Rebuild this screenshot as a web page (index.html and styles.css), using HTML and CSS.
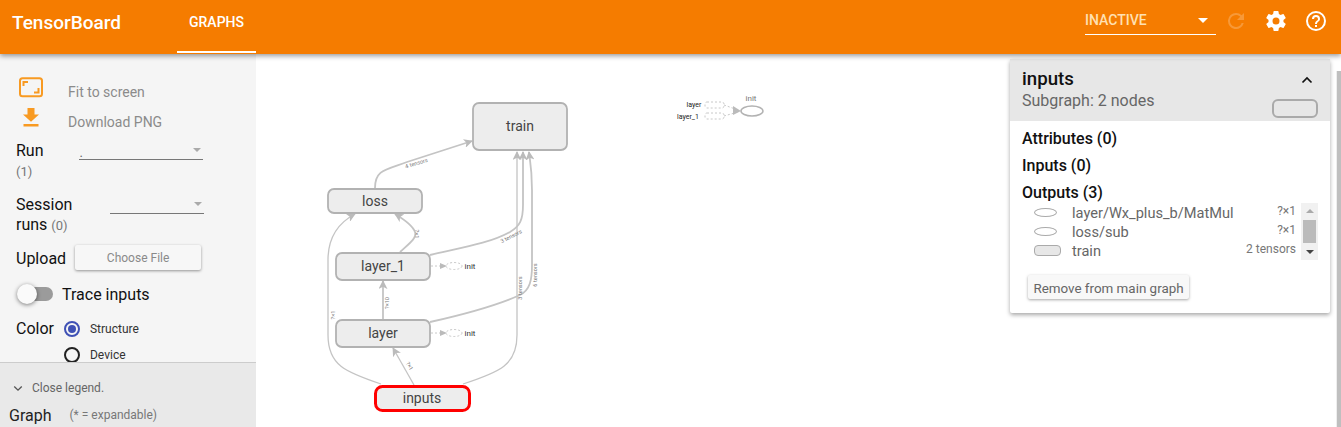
FILE: index.html
```html
<!DOCTYPE html>
<html lang="en">
<head>
<meta charset="utf-8">
<title>TensorBoard</title>
<link rel="stylesheet" href="styles.css">
</head>
<body>
<header class="topbar">
  <div class="brand">TensorBoard</div>
  <nav class="tabs"><div class="tab">GRAPHS</div></nav>
  <div class="top-actions">
    <div class="reload-select"><span>INACTIVE</span><i class="caret caret-white"></i></div>
    <svg class="top-icon dim" viewBox="0 0 24 24"><path fill="currentColor" d="M17.65 6.35A7.96 7.96 0 0 0 12 4a8 8 0 1 0 7.73 10h-2.08A6 6 0 1 1 12 6c1.66 0 3.14.69 4.22 1.78L13 11h7V4l-2.35 2.35z"/></svg>
    <svg class="top-icon" viewBox="0 0 24 24"><path fill="currentColor" d="M19.43 12.98c.04-.32.07-.64.07-.98s-.03-.66-.07-.98l2.11-1.65a.5.5 0 0 0 .12-.64l-2-3.46a.5.5 0 0 0-.61-.22l-2.49 1a7.3 7.3 0 0 0-1.69-.98l-.38-2.65A.49.49 0 0 0 14 2h-4a.49.49 0 0 0-.49.42l-.38 2.65c-.61.25-1.17.59-1.69.98l-2.49-1a.5.5 0 0 0-.61.22l-2 3.46a.49.49 0 0 0 .12.64l2.11 1.65c-.04.32-.07.65-.07.98s.03.66.07.98l-2.11 1.65a.5.5 0 0 0-.12.64l2 3.46c.12.22.39.3.61.22l2.49-1c.52.4 1.08.73 1.69.98l.38 2.65c.03.24.24.42.49.42h4c.25 0 .46-.18.49-.42l.38-2.65c.61-.25 1.17-.59 1.69-.98l2.49 1c.23.09.49 0 .61-.22l2-3.46a.5.5 0 0 0-.12-.64l-2.11-1.65zM12 15.5a3.5 3.5 0 1 1 0-7 3.5 3.5 0 0 1 0 7z"/></svg>
    <svg class="top-icon" viewBox="0 0 24 24"><path fill="currentColor" d="M11 18h2v-2h-2v2zm1-16a10 10 0 1 0 0 20 10 10 0 0 0 0-20zm0 18a8 8 0 1 1 0-16 8 8 0 0 1 0 16zm0-14a4 4 0 0 0-4 4h2a2 2 0 1 1 4 0c0 2-3 1.75-3 5h2c0-2.25 3-2.5 3-5a4 4 0 0 0-4-4z"/></svg>
  </div>
</header>

<div class="main">
  <aside class="sidebar">
    <div class="controls">
      <div class="action action-fit">
        <svg class="action-icon" viewBox="0 0 26 22"><rect x="1" y="1.200" width="22" height="18" rx="2.500" fill="none" stroke="#f89a22" stroke-width="2"/><path d="M4.500 9V5H9M19.500 11v4.500H15" fill="none" stroke="#f89a22" stroke-width="2"/></svg>
        <span>Fit to screen</span>
      </div>
      <div class="action action-png">
        <svg class="action-icon" viewBox="0 0 26 22"><path fill="#f89a22" d="M8.500 1h7v6.500H20l-8 7.200-8-7.200h4.500zM4.500 17h15v2.600h-15z"/></svg>
        <span>Download PNG</span>
      </div>
      <div class="field field-run">
        <div class="field-label">Run<small>(1)</small></div>
        <div class="select select-run"><span>.</span><i class="caret"></i></div>
      </div>
      <div class="field field-session">
        <div class="field-label">Session<br>runs <small class="inline">(0)</small></div>
        <div class="select select-session"><i class="caret"></i></div>
      </div>
      <div class="upload">
        <span>Upload</span>
        <button class="btn-file" type="button">Choose File</button>
      </div>
      <div class="trace">
        <div class="toggle"><i></i></div>
        <span>Trace inputs</span>
      </div>
      <div class="color">
        <span class="color-label">Color</span>
        <div class="radios">
          <div class="radio on"><i></i><span>Structure</span></div>
          <div class="radio"><i></i><span>Device</span></div>
        </div>
      </div>
    </div>
    <div class="legend">
      <div class="legend-close">
        <svg viewBox="0 0 12 8"><path d="M1.500 1.500 6 6l4.500-4.500" fill="none" stroke="#555" stroke-width="1.600"/></svg>
        <span>Close legend.</span>
      </div>
      <div class="legend-head"><span class="legend-title">Graph</span><span class="legend-note">(* = expandable)</span></div>
    </div>
  </aside>

  <main class="canvas">
    <svg class="graph" viewBox="0 0 1085 373" width="1085" height="373">
      <defs>
        <marker id="arr" viewBox="0 0 10 10" refX="9" refY="5" markerWidth="9" markerHeight="9" markerUnits="userSpaceOnUse" orient="auto"><path d="M0 0 10 5 0 10 2.500 5z" fill="#bbb"/></marker>
      </defs>
      <g class="edges" transform="translate(-256 -54)">
        <path d="M375 188C375 170 385 170 407 162L472 141" marker-end="url(#arr)"/>
        <path class="thin" d="M381 384C345 372 328 365 328 335V260C328 235 340 222 355 214" marker-end="url(#arr)"/>
        <path d="M400 252C410 243 417 238 415 232C413 226 405 220 395 214" marker-end="url(#arr)"/>
        <path d="M430 255C465 247 490 243 510 232C520 226 523 220 523 205V152" marker-end="url(#arr)"/>
        <path d="M383 319V281" marker-end="url(#arr)"/>
        <path d="M430 322C470 313 500 304 520 295C530 290 532 280 532 265V190C532 170 530 160 529 152" marker-end="url(#arr)"/>
        <path class="thin" d="M463 384C500 372 517 365 517 335V152" marker-end="url(#arr)"/>
        <path class="thin" d="M414 385 393 348" marker-end="url(#arr)"/>
      </g>
      <g class="dashes" transform="translate(-256 -54)">
        <path d="M431 266H443M431 333H443"/>
        <path class="mini-arrow" d="M440 263 447 266 440 269zM440 330 447 333 440 336z"/>
        <ellipse cx="454" cy="266" rx="8" ry="3.500"/>
        <ellipse cx="454" cy="333" rx="8" ry="3.500"/>
        <rect x="705" y="102" width="19" height="6" rx="2"/>
        <rect x="705" y="113" width="19" height="6" rx="2"/>
        <path d="M724 105 738 110M724 116 738 112"/>
        <path class="mini-arrow" d="M733 106 741 111 733 115z"/>
      </g>
      <g transform="translate(-256 -54)">
        <rect class="node" x="473" y="103" width="94" height="47" rx="6"/>
        <rect class="node" x="328" y="189" width="94" height="24" rx="6"/>
        <rect class="node" x="336" y="253" width="94" height="27" rx="6"/>
        <rect class="node" x="336" y="320" width="94" height="27" rx="6"/>
        <rect class="node selected" x="375.500" y="386.500" width="94" height="24" rx="7"/>
        <ellipse class="mini-ellipse" cx="752" cy="111" rx="11" ry="5"/>
        <text class="label" x="520" y="131">train</text>
        <text class="label" x="375" y="206">loss</text>
        <text class="label" x="383" y="271">layer_1</text>
        <text class="label" x="383" y="338">layer</text>
        <text class="label" x="422" y="403">inputs</text>
        <text class="tiny" x="470" y="269">init</text>
        <text class="tiny" x="470" y="336">init</text>
        <text class="tiny mini-dark" x="694" y="107">layer</text>
        <text class="tiny mini-dark" x="688" y="119">layer_1</text>
        <text class="tiny mini-grey" x="751" y="101">init</text>
        <text class="edge-label" transform="translate(417 165) rotate(-17)">4 tensors</text>
        <text class="edge-label" transform="translate(512 238) rotate(-27)">3 tensors</text>
        <text class="edge-label" transform="translate(415 234) rotate(90)">?×1</text>
        <text class="edge-label" transform="translate(389 303) rotate(-90)">?×10</text>
        <text class="edge-label" transform="translate(335 315) rotate(-90)">?×1</text>
        <text class="edge-label" transform="translate(522 288) rotate(-90)">3 tensors</text>
        <text class="edge-label" transform="translate(537 275) rotate(-90)">6 tensors</text>
        <text class="edge-label" transform="translate(408 367) rotate(60)">?×1</text>
      </g>
    </svg>

    <section class="card">
      <div class="card-head">
        <div>
          <div class="card-title">inputs</div>
          <div class="card-sub">Subgraph: 2 nodes</div>
        </div>
        <div class="card-head-right">
          <svg class="chev" viewBox="0 0 12 8"><path d="M1.500 6.500 6 2l4.500 4.500" fill="none" stroke="#111" stroke-width="1.700"/></svg>
          <i class="pill"></i>
        </div>
      </div>
      <div class="card-body">
        <div class="sect">Attributes (0)</div>
        <div class="sect">Inputs (0)</div>
        <div class="sect">Outputs (3)</div>
        <div class="outputs">
          <div class="rows">
            <div class="row"><i class="ico-ell"></i><span class="name">layer/Wx_plus_b/MatMul</span><span class="dim-text">?×1</span></div>
            <div class="row"><i class="ico-ell"></i><span class="name">loss/sub</span><span class="dim-text">?×1</span></div>
            <div class="row"><i class="ico-rect"></i><span class="name">train</span><span class="dim-text">2 tensors</span></div>
          </div>
          <div class="minibar"><i class="up"></i><b></b><i class="down"></i></div>
        </div>
        <button class="btn-remove" type="button">Remove from main graph</button>
      </div>
    </section>
    <div class="pagebar"></div>
  </main>
</div>
</body>
</html>
```
FILE: styles.css
```css
* { box-sizing: border-box; }
html, body { margin: 0; height: 100%; overflow: hidden; }
body { width: 1341px; height: 427px; font-family: Roboto, "Liberation Sans", sans-serif; background: #fff; color: #111; display: flex; flex-direction: column; }

.topbar { height: 54px; flex: none; background: #f57c00; color: #fff; display: flex; align-items: stretch; box-shadow: 0 2px 5px rgba(0,0,0,.4); position: relative; z-index: 3; }
.brand { font-size: 19px; font-weight: 500; padding: 11px 0 0 12px; width: 177px; }
.tabs { width: 79px; display: flex; }
.tab { flex: 1; text-align: center; font-size: 14px; font-weight: 500; padding-top: 14px; border-bottom: 2px solid #fff; margin-bottom: 1px; }
.top-actions { margin-left: auto; display: flex; align-items: flex-start; padding: 9px 13px 0 0; gap: 16px; }
.reload-select { width: 131px; height: 26px; border-bottom: 1px solid #fff; font-size: 14px; font-weight: 500; color: #ffe0b2; display: flex; align-items: center; justify-content: space-between; padding: 0 8px 3px 0; margin-right: -8px; }
.caret { display: block; width: 0; height: 0; border: 5px solid transparent; border-top-color: #999; border-bottom: 0; }
.caret-white { border-top-color: #fff; }
.top-icon { width: 24px; height: 24px; color: #fff; flex: none; }
.top-icon.dim { opacity: .22; }

.main { flex: 1; display: flex; min-height: 0; }
.sidebar { width: 256px; flex: none; background: #f5f5f5; display: flex; flex-direction: column; overflow: hidden; }
.controls { height: 308px; overflow: hidden; flex: none; padding: 23px 0 0 16px; font-size: 16px; }
.action { display: flex; align-items: center; color: #8b8b8b; font-size: 14px; height: 30px; }
.action-icon { width: 26px; height: 22px; margin: -8px 23px 0 3px; flex: none; }

.field { display: flex; align-items: flex-start; }
.field-run { margin-top: 4px; height: 54px; }
.field-label { line-height: 20px; color: #111; }
.field-label small { display: block; font-size: 13px; color: #777; line-height: 18px; margin-top: 2px; }
.field-label small.inline { display: inline; line-height: 1; margin: 0; }
.select { border-bottom: 1px solid #777; height: 20px; display: flex; justify-content: space-between; align-items: center; padding-right: 2px; font-size: 13px; color: #666; }
.select .caret { border-width: 4px; border-bottom: 0; border-top-color: #aaa; }
.select-run { width: 124px; margin-left: 35px; margin-top: -1px; }
.select-run span { position: relative; top: 3px; left: 1px; }
.select-session { width: 94px; margin-left: 38px; margin-top: -1px; justify-content: flex-end; }
.field-session { height: 44px; }

.upload { display: flex; align-items: center; margin-top: 4px; height: 30px; }
.btn-file { width: 126px; height: 25px; margin: -2px 0 0 9px; padding-top: 2px; border: 0; border-radius: 2px; background: #f7f7f7; box-shadow: 0 1px 3px rgba(0,0,0,.4); color: #8a8a8a; font: 12px Roboto, sans-serif; }

.trace { display: flex; align-items: center; margin-top: 7px; height: 28px; }
.toggle { width: 35px; height: 14px; border-radius: 7px; background: #9b9b9b; position: relative; margin-left: 2px; }
.toggle i { position: absolute; left: -1px; top: -3px; width: 20px; height: 20px; border-radius: 50%; background: #fafafa; box-shadow: 0 1px 4px rgba(0,0,0,.5); }
.trace span { margin-left: 9px; }

.color { display: flex; margin-top: 9px; }
.color-label { line-height: 24px; }
.radios { margin: -1px 0 0 10px; }
.radio { display: flex; align-items: center; height: 26px; font-size: 12px; color: #333; }
.radio i { width: 16px; height: 16px; border-radius: 50%; border: 2px solid #222; margin-right: 10px; position: relative; }
.radio.on i { border-color: #3f51b5; }
.radio.on i::after { content: ""; position: absolute; inset: 2px; border-radius: 50%; background: #3f51b5; }

.legend { flex: 1; background: #e9e9e9; border-top: 1px solid #ccc; padding: 0 0 0 9px; }
.legend-close { display: flex; align-items: center; height: 22px; margin-top: 14px; font-size: 12px; color: #666; padding-left: 4px; }
.legend-close svg { width: 10px; height: 7px; margin-right: 9px; }
.legend-head { display: flex; align-items: center; margin-top: 6px; height: 20px; }
.legend-title { font-size: 16px; color: #222; }
.legend-note { font-size: 12px; color: #777; margin-left: 18px; }

.canvas { flex: 1; position: relative; background: #fff; overflow: hidden; }
.graph { display: block; position: absolute; left: 0; top: 0; }
.edges path { fill: none; stroke: #c4c4c4; stroke-width: 1.800; }
.edges path.thin { stroke-width: 1.300; }
.dashes path, .dashes ellipse, .dashes rect { fill: none; stroke: #c8c8c8; stroke-width: 1; stroke-dasharray: 2 2; }
.dashes .mini-arrow { fill: #bbb; stroke: none; }
.node { fill: #ededed; stroke: #b2b2b2; stroke-width: 1.800; }
.node.selected { stroke: #f00; stroke-width: 3; }
.mini-ellipse { fill: #fff; stroke: #b2b2b2; stroke-width: 1.500; }
.label { font-size: 14px; fill: #444; text-anchor: middle; }
.tiny { font-size: 8px; fill: #333; text-anchor: middle; }
.mini-dark { fill: #222; font-size: 7px; }
.mini-grey { fill: #777; }
.edge-label { font-size: 5.600px; fill: #777; text-anchor: middle; }

.card { position: absolute; left: 754px; top: 5px; width: 320px; height: 254px; background: #fff; border-radius: 2px; box-shadow: 0 2px 4px rgba(0,0,0,.35); }
.card-head { height: 62px; background: #e7e7e7; display: flex; justify-content: space-between; padding: 9px 12px 0 12px; }
.card-title { font-size: 18.700px; font-weight: 500; line-height: 22px; color: #111; }
.card-sub { font-size: 16px; color: #666; line-height: 20px; margin-top: 1px; }
.card-head-right { display: flex; flex-direction: column; align-items: flex-end; }
.chev { width: 12px; height: 8px; margin: 8px 5px 0 0; }
.pill { width: 46px; height: 19px; border: 2px solid #aaa; border-radius: 6px; background: #e7e7e7; margin-top: 15px; }
.card-body { padding: 8px 12px 0 12px; }
.sect { font-size: 16px; font-weight: 500; line-height: 20px; margin-bottom: 7px; color: #111; }
.outputs { display: flex; margin-top: -7px; height: 57px; }
.rows { width: 274px; padding-left: 12px; }
.row { display: flex; align-items: center; height: 19px; color: #666; font-size: 14.600px; }
.row .name { flex: 1; }
.dim-text { font-size: 12px; color: #777; margin-left: auto; position: relative; top: -2px; }
.ico-ell { width: 23px; height: 9px; border: 1px solid #aaa; border-radius: 50%; margin-right: 15px; flex: none; }
.ico-rect { width: 27px; height: 11px; border: 1px solid #aaa; border-radius: 4px; margin-right: 11px; background: #e7e7e7; flex: none; }
.minibar { width: 17px; margin-left: 5px; background: #f1f1f1; display: flex; flex-direction: column; align-items: center; justify-content: space-between; padding: 6px 0; }
.minibar b { width: 13px; height: 23px; background: #bbb; margin-top: -1px; }
.minibar i { width: 0; height: 0; border: 4px solid transparent; }
.minibar .up { border-top: 0; border-bottom-color: #aaa; }
.minibar .down { border-bottom: 0; border-top-color: #444; }
.btn-remove { display: block; margin: 15px 0 0 6px; padding: 2px 0 0; width: 161px; height: 24px; border: 0; border-radius: 2px; background: #f8f8f8; box-shadow: 0 1px 3px rgba(0,0,0,.35); color: #666; font: 13.400px Roboto, sans-serif; }
.pagebar { position: absolute; right: 0; top: 17px; bottom: 0; width: 5px; background: #bfbfbf; border-left: 1px solid #eee; }
```
